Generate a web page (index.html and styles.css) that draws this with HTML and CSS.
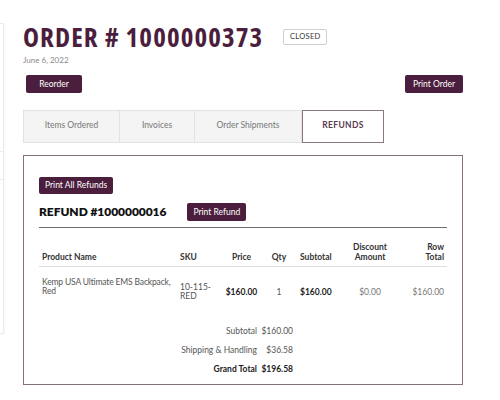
FILE: index.html
```html
<!DOCTYPE html>
<html>
<head>
<meta charset="utf-8">
<link rel="stylesheet" href="styles.css">
</head>
<body>
<div class="page">
  <aside class="sidebar">
    <div class="side-sec"></div>
    <div class="side-sec"></div>
    <div class="side-sec last"></div>
  </aside>
  <main class="main">
    <div class="title-row">
      <h1 class="title">ORDER # 1000000373</h1>
      <span class="badge">CLOSED</span>
    </div>
    <div class="date">June 6, 2022</div>
    <div class="actions">
      <button class="btn btn-reorder">Reorder</button>
      <button class="btn">Print Order</button>
    </div>
    <nav class="tabs">
      <div class="tab t1">Items Ordered</div>
      <div class="tab t2">Invoices</div>
      <div class="tab t3">Order Shipments</div>
      <div class="tab t4 active">REFUNDS</div>
    </nav>
    <section class="panel">
      <button class="btn btn-small">Print All Refunds</button>
      <div class="refund-head">
        <h2 class="refund-title">REFUND #1000000016</h2>
        <button class="btn btn-refund">Print Refund</button>
      </div>
      <table class="items">
        <colgroup>
          <col class="c1"><col class="c2"><col class="c3"><col class="c4"><col class="c5"><col class="c6"><col class="c7">
        </colgroup>
        <thead>
          <tr>
            <th class="left">Product Name</th>
            <th class="left sku-h">SKU</th>
            <th class="center">Price</th>
            <th class="center">Qty</th>
            <th class="left">Subtotal</th>
            <th class="center">Discount<br>Amount</th>
            <th class="right">Row<br>Total</th>
          </tr>
        </thead>
        <tbody>
          <tr>
            <td class="left name">Kemp USA Ultimate EMS Backpack, Red</td>
            <td class="left sku">10-115-<br>RED</td>
            <td class="center strong">$160.00</td>
            <td class="center">1</td>
            <td class="left strong">$160.00</td>
            <td class="center muted">$0.00</td>
            <td class="right muted">$160.00</td>
          </tr>
        </tbody>
      </table>
      <div class="totals">
        <div class="t-label">Subtotal</div><div class="t-val">$160.00</div>
        <div class="t-label">Shipping &amp; Handling</div><div class="t-val">$36.58</div>
        <div class="t-label grand">Grand Total</div><div class="t-val grand">$196.58</div>
      </div>
    </section>
  </main>
</div>
</body>
</html>
```

FILE: styles.css
```css
html, body {
  margin: 0;
  padding: 0;
  background: #ffffff;
}
body {
  font-family: "Lato", "Open Sans", sans-serif;
  color: #333333;
  width: 500px;
  height: 400px;
  overflow: hidden;
}
.page {
  display: flex;
  align-items: flex-start;
}
.sidebar {
  width: 3px;
  margin-top: 23px;
  height: 309px;
  border: 1px solid #ececec;
  border-left: none;
  box-shadow: 1px 0 2px rgba(0,0,0,0.04);
  display: flex;
  flex-direction: column;
  flex-shrink: 0;
}
.side-sec {
  border-bottom: 1px solid #ececec;
  height: 127px;
}
.side-sec + .side-sec {
  height: 27px;
}
.side-sec.last {
  border-bottom: none;
  flex: 1;
}
.main {
  margin-left: 19px;
  width: 440px;
}
.title-row {
  display: flex;
  align-items: center;
  margin-top: 22px;
  height: 30px;
}
.title {
  margin: 0;
  font-family: "Open Sans", "Noto Sans", sans-serif;
  font-stretch: 75%;
  font-weight: 700;
  font-size: 27px;
  line-height: 30px;
  letter-spacing: 1.1px;
  color: #4a1e3c;
}
.badge {
  margin-left: 20px;
  width: 44px;
  height: 16px;
  box-sizing: border-box;
  border: 1px solid #cfcfcf;
  border-radius: 2px;
  font-size: 7.5px;
  line-height: 14px;
  text-align: center;
  letter-spacing: 0.3px;
  color: #333;
}
.date {
  margin-top: 3px;
  font-size: 8px;
  line-height: 10px;
  color: #8a8a8a;
}
.actions {
  display: flex;
  justify-content: space-between;
  margin-top: 10px;
  padding-left: 3px;
}
.btn {
  font-family: "Lato", "Open Sans", sans-serif;
  background: #4a1e3c;
  color: #ffffff;
  border: none;
  border-radius: 2px;
  font-size: 8.5px;
  height: 18px;
  line-height: 18px;
  padding: 0 8px;
  cursor: pointer;
}
.btn-reorder {
  width: 56px;
}
.btn-refund {
  padding: 0 6px;
}
.btn-small {
  height: 17px;
  line-height: 17px;
  padding: 0 6px;
}
.tabs {
  display: flex;
  margin-top: 17px;
  height: 33px;
}
.tab {
  box-sizing: border-box;
  height: 33px;
  background: #f4f4f4;
  border: 1px solid #e2e2e2;
  border-left: none;
  font-size: 8.5px;
  color: #777;
  text-align: center;
  line-height: 28px;
}
.tab.t1 { width: 97px; border-left: 1px solid #e2e2e2; }
.tab.t2 { width: 75px; }
.tab.t3 { width: 107px; }
.tab.t4 { width: 82px; }
.tab.active {
  background: #ffffff;
  border: 1px solid #8c7885;
  font-weight: 700;
  color: #5a3a50;
  letter-spacing: 0.3px;
}
.panel {
  margin-top: 12px;
  box-sizing: border-box;
  width: 440px;
  border: 1px solid #85707d;
  padding: 16px 15px 5px;
}
.refund-head {
  display: flex;
  align-items: center;
  margin-top: 9px;
  padding-bottom: 6px;
  border-bottom: 1px solid #6e6e6e;
}
.refund-title {
  margin: 0 21px 0 0;
  font-size: 12px;
  line-height: 16px;
  font-weight: 800;
  letter-spacing: -0.05px;
  color: #111;
}
.items {
  margin-top: 15px;
  width: 408px;
  border-collapse: collapse;
  table-layout: fixed;
  font-size: 8.5px;
}
.c1 { width: 140px; }
.c2 { width: 43px; }
.c3 { width: 39px; }
.c4 { width: 36px; }
.c5 { width: 38px; }
.c6 { width: 70px; }
.c7 { width: 42px; }
.items th {
  font-weight: 700;
  color: #333;
  line-height: 9.5px;
  padding: 0 3px 4px;
  vertical-align: bottom;
  border-bottom: 1px solid #dddddd;
}
.items td {
  padding: 16px 3px;
  line-height: 9px;
  vertical-align: middle;
  color: #555;
}
.items th.sku-h, .items td.sku {
  padding-left: 1px;
}
.items td.name {
  vertical-align: top;
  padding-top: 11px;
  padding-right: 0;
  letter-spacing: -0.15px;
}
.left { text-align: left; }
.center { text-align: center; }
.right { text-align: right; }
.items td.strong { font-weight: 700; color: #222; }
.items td.muted { color: #777; }
.totals {
  display: grid;
  grid-template-columns: 218px 36px;
  margin-top: 5px;
  font-size: 8.5px;
  line-height: 19px;
  color: #555;
}
.t-label, .t-val {
  text-align: right;
}
.grand {
  font-weight: 700;
  color: #222;
}
```
